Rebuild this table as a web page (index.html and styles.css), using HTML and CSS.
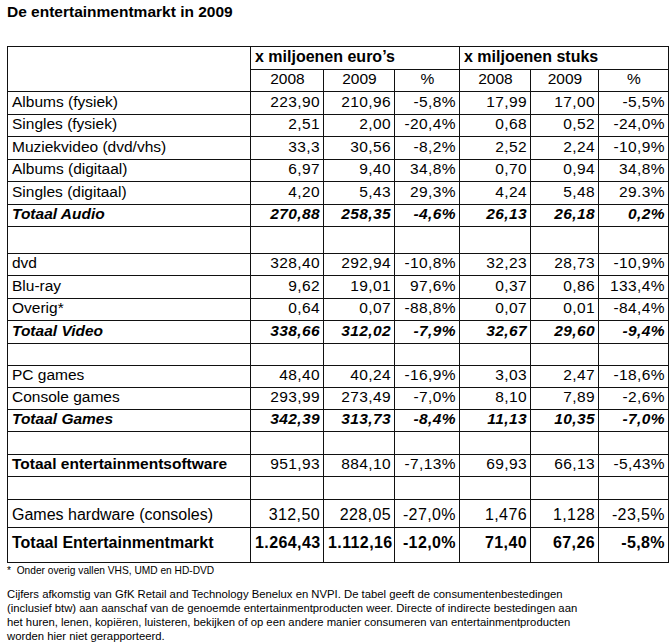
FILE: index.html
```html
<!DOCTYPE html>
<html lang="nl">
<head>
<meta charset="utf-8">
<title>De entertainmentmarkt in 2009</title>
<link rel="stylesheet" href="styles.css">
</head>
<body>
<div class="page">
  <h1 class="title">De entertainmentmarkt in 2009</h1>
  <table class="market">
    <colgroup>
      <col class="c-label"><col class="c-a"><col class="c-b"><col class="c-c"><col class="c-d"><col class="c-e"><col class="c-f">
    </colgroup>
    <tbody>
      <tr class="r-h1"><td rowspan="2"></td><td colspan="3" class="grp">x miljoenen euro’s</td><td colspan="3" class="grp">x miljoenen stuks</td></tr>
      <tr class="r-h2"><td class="yr">2008</td><td class="yr">2009</td><td class="yr">%</td><td class="yr">2008</td><td class="yr">2009</td><td class="yr">%</td></tr>

      <tr class="r"><td class="lbl">Albums (fysiek)</td><td class="num">223,90</td><td class="num">210,96</td><td class="num">-5,8%</td><td class="num">17,99</td><td class="num">17,00</td><td class="num">-5,5%</td></tr>
      <tr class="r"><td class="lbl">Singles (fysiek)</td><td class="num">2,51</td><td class="num">2,00</td><td class="num">-20,4%</td><td class="num">0,68</td><td class="num">0,52</td><td class="num">-24,0%</td></tr>
      <tr class="r"><td class="lbl">Muziekvideo (dvd/vhs)</td><td class="num">33,3</td><td class="num">30,56</td><td class="num">-8,2%</td><td class="num">2,52</td><td class="num">2,24</td><td class="num">-10,9%</td></tr>
      <tr class="r"><td class="lbl">Albums (digitaal)</td><td class="num">6,97</td><td class="num">9,40</td><td class="num">34,8%</td><td class="num">0,70</td><td class="num">0,94</td><td class="num">34,8%</td></tr>
      <tr class="r"><td class="lbl">Singles (digitaal)</td><td class="num">4,20</td><td class="num">5,43</td><td class="num">29,3%</td><td class="num">4,24</td><td class="num">5,48</td><td class="num">29.3%</td></tr>
      <tr class="r tot"><td class="lbl">Totaal Audio</td><td class="num">270,88</td><td class="num">258,35</td><td class="num">-4,6%</td><td class="num">26,13</td><td class="num">26,18</td><td class="num">0,2%</td></tr>
      <tr class="r-blank-a"><td></td><td></td><td></td><td></td><td></td><td></td><td></td></tr>

      <tr class="r"><td class="lbl">dvd</td><td class="num">328,40</td><td class="num">292,94</td><td class="num">-10,8%</td><td class="num">32,23</td><td class="num">28,73</td><td class="num">-10,9%</td></tr>
      <tr class="r"><td class="lbl">Blu-ray</td><td class="num">9,62</td><td class="num">19,01</td><td class="num">97,6%</td><td class="num">0,37</td><td class="num">0,86</td><td class="num">133,4%</td></tr>
      <tr class="r"><td class="lbl">Overig*</td><td class="num">0,64</td><td class="num">0,07</td><td class="num">-88,8%</td><td class="num">0,07</td><td class="num">0,01</td><td class="num">-84,4%</td></tr>
      <tr class="r tot"><td class="lbl">Totaal Video</td><td class="num">338,66</td><td class="num">312,02</td><td class="num">-7,9%</td><td class="num">32,67</td><td class="num">29,60</td><td class="num">-9,4%</td></tr>
      <tr class="r-blank"><td></td><td></td><td></td><td></td><td></td><td></td><td></td></tr>

      <tr class="r r-g"><td class="lbl">PC games</td><td class="num">48,40</td><td class="num">40,24</td><td class="num">-16,9%</td><td class="num">3,03</td><td class="num">2,47</td><td class="num">-18,6%</td></tr>
      <tr class="r r-g"><td class="lbl">Console games</td><td class="num">293,99</td><td class="num">273,49</td><td class="num">-7,0%</td><td class="num">8,10</td><td class="num">7,89</td><td class="num">-2,6%</td></tr>
      <tr class="r r-g tot"><td class="lbl">Totaal Games</td><td class="num">342,39</td><td class="num">313,73</td><td class="num">-8,4%</td><td class="num">11,13</td><td class="num">10,35</td><td class="num">-7,0%</td></tr>
      <tr class="r-blank"><td></td><td></td><td></td><td></td><td></td><td></td><td></td></tr>

      <tr class="r sw"><td class="lbl">Totaal entertainmentsoftware</td><td class="num">951,93</td><td class="num">884,10</td><td class="num">-7,13%</td><td class="num">69,93</td><td class="num">66,13</td><td class="num">-5,43%</td></tr>
      <tr class="r-blank"><td></td><td></td><td></td><td></td><td></td><td></td><td></td></tr>

      <tr class="r-hw big"><td class="lbl">Games hardware (consoles)</td><td class="num">312,50</td><td class="num">228,05</td><td class="num">-27,0%</td><td class="num">1,476</td><td class="num">1,128</td><td class="num">-23,5%</td></tr>
      <tr class="r-total big grand"><td class="lbl">Totaal Entertainmentmarkt</td><td class="num">1.264,43</td><td class="num">1.112,16</td><td class="num">-12,0%</td><td class="num">71,40</td><td class="num">67,26</td><td class="num">-5,8%</td></tr>
    </tbody>
  </table>
  <p class="footnote">*&nbsp; Onder overig vallen VHS, UMD en HD-DVD</p>
  <p class="source">Cijfers afkomstig van GfK Retail and Technology Benelux en NVPI. De tabel geeft de consumentenbestedingen (inclusief btw) aan aanschaf van de genoemde entertainmentproducten weer. Directe of indirecte bestedingen aan het huren, lenen, kopiëren, luisteren, bekijken of op een andere manier consumeren van entertainmentproducten worden hier niet gerapporteerd.</p>
</div>
</body>
</html>
```

FILE: styles.css
```css
html, body {
  margin: 0;
  padding: 0;
  background: #ffffff;
}

.page {
  padding: 3px 0 0 7px;
  font-family: "Liberation Sans", Arial, sans-serif;
  color: #000000;
}

.title {
  margin: 0;
  font-size: 15.5px;
  line-height: 18px;
  font-weight: bold;
}

.market {
  margin-top: 25px;
  border-collapse: collapse;
  table-layout: fixed;
  width: 661px;
  font-size: 15.5px;
}

.c-label { width: 243px; }
.c-a { width: 73px; }
.c-b { width: 71px; }
.c-c { width: 65px; }
.c-d { width: 71px; }
.c-e { width: 68px; }
.c-f { width: 70px; }

.market td {
  border: 1px solid #111111;
  padding: 0 3px 4px 4px;
  vertical-align: bottom;
  white-space: nowrap;
  overflow: hidden;
  line-height: 17px;
}

.r-h1 { height: 23px; }
.r-h2 { height: 22px; }
.r { height: 22.5px; }
.r-g { height: 22px; }
.r-blank-a { height: 26.5px; }
.r-blank { height: 22.5px; }
.r-hw { height: 28px; }
.r-total { height: 35px; }

.grp {
  font-weight: bold;
  font-size: 16px;
  text-align: left;
}

.yr {
  text-align: center;
}

.lbl {
  text-align: left;
}

.num {
  text-align: right;
  letter-spacing: 0.4px;
}

.tot td {
  font-weight: bold;
  font-style: italic;
}

.sw .lbl {
  font-weight: bold;
}

.big td {
  font-size: 16px;
}

.r-total td {
  vertical-align: middle;
  padding-bottom: 5px;
}

.grand td {
  font-weight: bold;
}

.footnote {
  margin: 1px 0 0 0;
  font-size: 10.2px;
  line-height: 14px;
}

.source {
  margin: 9px 0 0 0;
  font-size: 11.3px;
  line-height: 14px;
  width: 580px;
}
```
